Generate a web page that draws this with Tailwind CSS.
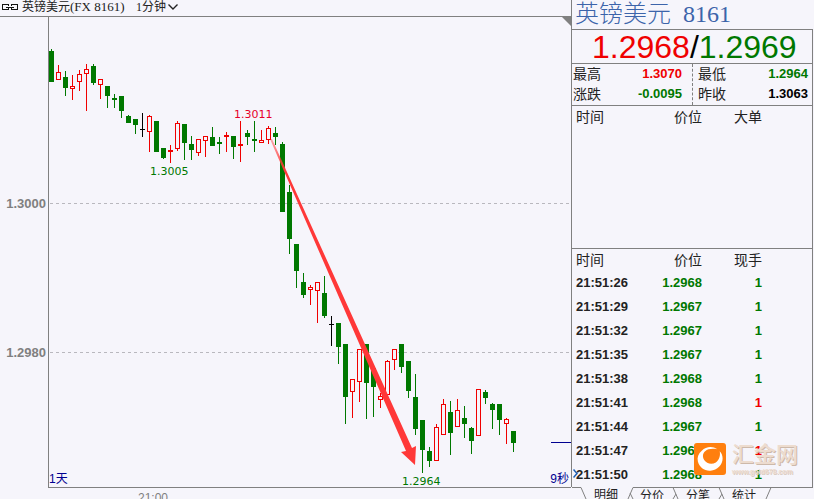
<!DOCTYPE html>
<html lang="zh-CN">
<head>
    <meta charset="UTF-8">
    <meta name="viewport" content="width=device-width, initial-scale=1.0">
    <title>英镑美元(FX 8161)</title>
    <script src="https://cdn.jsdelivr.net/npm/@tailwindcss/browser@4"></script>
</head>
<body class="bg-[#f6f5fb] text-[#222] font-['Liberation_Sans','Noto_Sans_CJK_SC',sans-serif]">
    <div class="flex h-screen overflow-hidden">

        <!-- Chart -->
        <main class="flex flex-col flex-1 min-w-0">
            <header class="relative flex items-center h-[17px] pb-[2px] pl-[2px] border-b border-[#808080] text-xs leading-[14px]">
                <svg class="w-4 h-[6px] mr-1" viewBox="0 0 16 6" fill="none" stroke="#111" stroke-width="1" shape-rendering="crispEdges">
                    <path d="M6.500 2V.5H.5V5.500H6.500V4M9.500 2V.5H15.500V5.500H9.500V4M4 3H12" />
                </svg>
                <h1 class="flex font-['Liberation_Serif','Noto_Sans_CJK_SC',serif]">
                    <span>英镑美元</span><span class="w-[66px] text-[13px] leading-[14px]">(FX 8161)</span>
                </h1>
                <select aria-label="周期" class="appearance-none w-8 leading-[14px] font-['Liberation_Serif','Noto_Sans_CJK_SC',serif]">
                    <option>1分钟</option>
                </select>
                <svg class="w-[10px] h-[6px]" viewBox="0 0 10 6" fill="none" stroke="#222" stroke-width="1.4"><path d="M.5.5L5 5L9.500.5" /></svg>
                <svg class="absolute right-0 top-[17px] w-[9px] h-[9px]" viewBox="0 0 9 9"><path d="M0 0H9V9Z" fill="#808080" /></svg>
            </header>

            <div class="relative flex flex-1 min-h-0">
                <div class="w-12 shrink-0"></div>
                <div class="flex-1 border-l border-b border-[#808080]"></div>
                <svg class="absolute inset-0 w-full h-full overflow-visible" role="img" aria-label="K线图">
                    <defs>
                        <linearGradient id="arrow" gradientUnits="userSpaceOnUse" x1="270" y1="139" x2="285" y2="172">
                            <stop offset="0" stop-color="#ff3838" stop-opacity=".4" />
                            <stop offset="1" stop-color="#ff3838" />
                        </linearGradient>
                    </defs>
                    <g transform="translate(0,-17)">
                        <g stroke="#b9b8be" stroke-dasharray="3 3" shape-rendering="crispEdges">
                            <line x1="50" x2="100%" y1="203.5" y2="203.5" />
                            <line x1="50" x2="100%" y1="352.5" y2="352.5" />
                        </g>
                        <g class="text-[13px] font-bold" fill="#808080" text-anchor="end">
                            <text x="46" y="208">1.3000</text>
                            <text x="46" y="357">1.2980</text>
                        </g>
                        <g id="candles" shape-rendering="crispEdges"></g>
                        <g class="text-[11px] font-['DejaVu_Sans',sans-serif]">
                            <text x="234" y="118" fill="#e6002a">1.3011</text>
                            <text x="150" y="175" fill="#007800">1.3005</text>
                            <text x="402" y="485" fill="#007800">1.2964</text>
                        </g>
                        <polygon points="270,139 272,139 412,448 416,446 415,465 401,452 406,451" fill="url(#arrow)" />
                    </g>
                </svg>
                <span class="absolute left-[49px] bottom-0 text-xs leading-[18px] text-[#000090]">1天</span>
                <div class="absolute right-0 bottom-[45px] w-5 h-px bg-[#000090]"></div>
                <span class="absolute right-[2px] bottom-0 text-xs leading-[18px] text-[#000090]">9秒</span>
            </div>

            <div class="h-[11px] overflow-hidden pl-[138px] pt-[2px] text-xs text-[#808080]">21:00</div>
        </main>

        <!-- Quote panel -->
        <aside class="relative flex flex-col w-[243px] shrink-0">
            <div class="flex flex-col flex-1 min-h-0 border-l border-[#808080]">
                <h2 class="flex gap-3 h-[29px] pl-[3px] text-2xl leading-[28px] text-[#3c64aa] font-['Liberation_Serif','Noto_Sans_CJK_SC',serif]">
                    <span class="font-light">英镑美元</span><span>8161</span>
                </h2>
                <div class="flex flex-col flex-1 min-h-0 mr-px border-r border-t border-[#808080]">
                    <p class="h-[34px] pl-5 text-[32px] leading-[34px] text-black border-b border-[#808080]"><span class="text-[#f00000]">1.2968</span>/<span class="text-[#007800]">1.2969</span></p>

                    <div class="flex h-[42px] border-b border-[#808080] text-sm leading-5">
                        <dl class="grid grid-cols-[auto_1fr] content-start w-[121px] pl-px pr-[10px] border-r border-dashed border-[#808080]">
                            <dt>最高</dt>
                            <dd class="text-right text-[13px] leading-5 font-bold text-[#f00000]">1.3070</dd>
                            <dt>涨跌</dt>
                            <dd class="text-right text-[13px] leading-5 font-bold text-[#007800]">-0.0095</dd>
                        </dl>
                        <dl class="grid grid-cols-[auto_1fr] content-start flex-1 pl-[5px] pr-1">
                            <dt>最低</dt>
                            <dd class="text-right text-[13px] leading-5 font-bold text-[#007800]">1.2964</dd>
                            <dt>昨收</dt>
                            <dd class="text-right text-[13px] leading-5 font-bold text-black">1.3063</dd>
                        </dl>
                    </div>

                    <div class="h-[143px] shrink-0 border-b border-[#808080]">
                        <table class="table-fixed w-full text-sm leading-[22px]">
                            <thead>
                                <tr class="text-right">
                                    <th class="w-[70px] pl-1 text-left font-normal">时间</th>
                                    <th class="w-[60px] font-normal">价位</th>
                                    <th class="w-[60px] font-normal">大单</th>
                                    <th></th>
                                </tr>
                            </thead>
                        </table>
                    </div>

                    <table class="table-fixed w-full text-[13px] leading-6 font-bold text-right">
                        <thead>
                            <tr class="text-sm leading-[22px]">
                                <th class="w-[70px] pl-1 text-left font-normal">时间</th>
                                <th class="w-[60px] font-normal">价位</th>
                                <th class="w-[60px] font-normal">现手</th>
                                <th></th>
                            </tr>
                        </thead>
                        <tbody class="text-[#007800]">
                            <tr><td class="pl-1 text-left text-[#222]">21:51:26</td><td>1.2968</td><td>1</td></tr>
                            <tr><td class="pl-1 text-left text-[#222]">21:51:29</td><td>1.2967</td><td>1</td></tr>
                            <tr><td class="pl-1 text-left text-[#222]">21:51:32</td><td>1.2967</td><td>1</td></tr>
                            <tr><td class="pl-1 text-left text-[#222]">21:51:35</td><td>1.2967</td><td>1</td></tr>
                            <tr><td class="pl-1 text-left text-[#222]">21:51:38</td><td>1.2968</td><td>1</td></tr>
                            <tr><td class="pl-1 text-left text-[#222]">21:51:41</td><td>1.2968</td><td class="text-[#f00000]">1</td></tr>
                            <tr><td class="pl-1 text-left text-[#222]">21:51:44</td><td>1.2967</td><td>1</td></tr>
                            <tr><td class="pl-1 text-left text-[#222]">21:51:47</td><td>1.2968</td><td class="text-[#f00000]">1</td></tr>
                            <tr><td class="pl-1 text-left text-[#222]">21:51:50</td><td>1.2968</td><td>1</td></tr>
                        </tbody>
                    </table>
                </div>
            </div>

            <!-- Tabs, the first one open at the top -->
            <nav class="flex h-3 shrink-0 overflow-hidden mr-px pl-px text-xs leading-[14px]">
                <svg class="w-[22px] h-3 shrink-0" fill="none" stroke="#808080"><path d="M-1 .5H9L14 12" /></svg>
                <button class="w-6 h-4">明细</button>
                <svg class="w-[22px] h-3 shrink-0" fill="none" stroke="#808080"><path d="M22 .5H15L10 12M12 6L15 12" /></svg>
                <button class="w-6 h-4 border-t border-[#808080]">分价</button>
                <svg class="w-[22px] h-3 shrink-0" fill="none" stroke="#808080"><path d="M0 .5H22M9 .5L14 12M12 7L9 12" /></svg>
                <button class="w-6 h-4 border-t border-[#808080]">分笔</button>
                <svg class="w-[22px] h-3 shrink-0" fill="none" stroke="#808080"><path d="M0 .5H22M9 .5L14 12M12 7L9 12" /></svg>
                <button class="w-6 h-4 border-t border-[#808080]">统计</button>
                <svg class="w-[22px] h-3 shrink-0" fill="none" stroke="#808080"><path d="M0 .5H22M15 .5L10 12" /></svg>
                <span class="flex-1 border-t border-[#808080]"></span>
            </nav>

            <svg class="absolute left-[2px] bottom-[21px] w-[5px] h-[9px]" viewBox="0 0 5 9" fill="none" stroke="#1e5fb4" stroke-width="1.5"><path d="M.5.5L4 4.500L.5 8.500" /></svg>

            <!-- Site logo -->
            <div class="absolute left-[123px] bottom-[22px] flex gap-[6px]">
                <svg class="w-8 h-8" viewBox="0 0 33 33">
                    <rect width="33" height="33" rx="3" fill="#ff7f0e" />
                    <path d="M8 8C4.500 11 3 15 4 19C5.500 25 11 29 17 28.500C24 28 29.500 22.500 29.500 16C29.500 13 28.500 10.500 26.500 8.500C27.500 13 26 17.500 22.500 20C18.500 22.500 13 21.500 10.500 17.500C8.500 14 9 10.500 11.500 8.500C14.500 6 19 5.500 24 6.500C19 3 12.500 3.500 8 8Z" fill="#fff" />
                </svg>
                <div class="text-[#eddccf]">
                    <p class="text-[22px] leading-6 font-medium [text-shadow:1px_1px_0_#cdb9aa]">汇金网</p>
                    <p class="text-[7px] leading-[10px] font-bold [text-shadow:1px_1px_0_#d9cabf]">www.gold678.com</p>
                </div>
            </div>
        </aside>
    </div>

    <script>
        // [high, body top, body bottom, low, colour] in chart pixels: g = down, r = up, k = flat
        const candles = [
            [49, 51, 82, 82, "g"], [65, 72, 80, 80, "r"], [71, 77, 88, 96, "g"], [75, 86, 89, 100, "r"],
            [70, 74, 82, 91, "r"], [64, 69, 74, 111, "r"], [64, 66, 83, 85, "g"], [79, 79, 85, 99, "r"],
            [86, 86, 96, 108, "g"], [94, 98, 100, 108, "g"], [96, 96, 111, 118, "g"], [115, 116, 123, 123, "g"],
            [119, 119, 125, 134, "g"], [113, 129, 130, 137, "k"], [115, 116, 132, 152, "r"], [121, 121, 152, 152, "g"],
            [148, 148, 158, 159, "g"], [145, 150, 152, 163, "r"], [121, 123, 149, 151, "r"], [124, 124, 143, 160, "g"],
            [136, 144, 150, 160, "g"], [139, 139, 153, 156, "r"], [136, 136, 141, 157, "r"], [127, 137, 146, 146, "g"],
            [137, 142, 144, 154, "g"], [132, 135, 137, 152, "r"], [136, 136, 147, 159, "g"], [121, 144, 146, 162, "r"],
            [130, 133, 137, 145, "g"], [121, 139, 141, 152, "g"], [130, 140, 143, 143, "r"], [126, 128, 140, 144, "r"],
            [127, 133, 137, 145, "g"], [142, 144, 212, 212, "g"], [185, 192, 239, 254, "g"], [244, 244, 271, 288, "g"],
            [273, 282, 295, 298, "g"], [285, 287, 290, 305, "r"], [282, 282, 291, 323, "r"], [276, 293, 316, 318, "g"],
            [316, 324, 325, 346, "k"], [323, 323, 347, 364, "g"], [344, 344, 397, 424, "g"], [379, 379, 392, 418, "r"],
            [349, 349, 382, 402, "r"], [344, 344, 383, 419, "g"], [368, 368, 387, 417, "g"], [393, 396, 400, 408, "r"],
            [360, 361, 395, 395, "r"], [349, 349, 360, 370, "r"], [344, 344, 367, 373, "g"], [361, 361, 391, 398, "g"],
            [374, 397, 429, 435, "g"], [420, 420, 450, 473, "g"], [447, 451, 461, 467, "g"], [424, 427, 461, 461, "r"],
            [399, 404, 435, 435, "r"], [401, 412, 433, 455, "g"], [399, 410, 427, 427, "r"], [406, 418, 424, 438, "g"],
            [427, 428, 441, 454, "g"], [389, 389, 436, 436, "r"], [390, 392, 398, 404, "g"], [403, 404, 410, 429, "g"],
            [404, 404, 420, 435, "g"], [418, 419, 424, 444, "r"], [431, 431, 443, 452, "g"]
        ];
        const colors = { g: "#007800", r: "#f00000", k: "#000000" };

        document.getElementById("candles").innerHTML = candles.map(([high, top, bottom, low, c], i) => {
            const x = 51 + i * 7;
            const hollow = c === "r" && bottom - top > 2;
            const wick = `<rect x="${x}" y="${high}" width="1" height="${low - high}" fill="${colors[c]}" />`;
            const body = hollow
                ? `<rect x="${x - 1.5}" y="${top + 0.5}" width="4" height="${bottom - top - 1}" fill="#f6f5fb" stroke="${colors.r}" />`
                : `<rect x="${x - 2}" y="${top}" width="5" height="${bottom - top}" fill="${colors[c]}" />`;
            return wick + body;
        }).join("");
    </script>
</body>
</html>
